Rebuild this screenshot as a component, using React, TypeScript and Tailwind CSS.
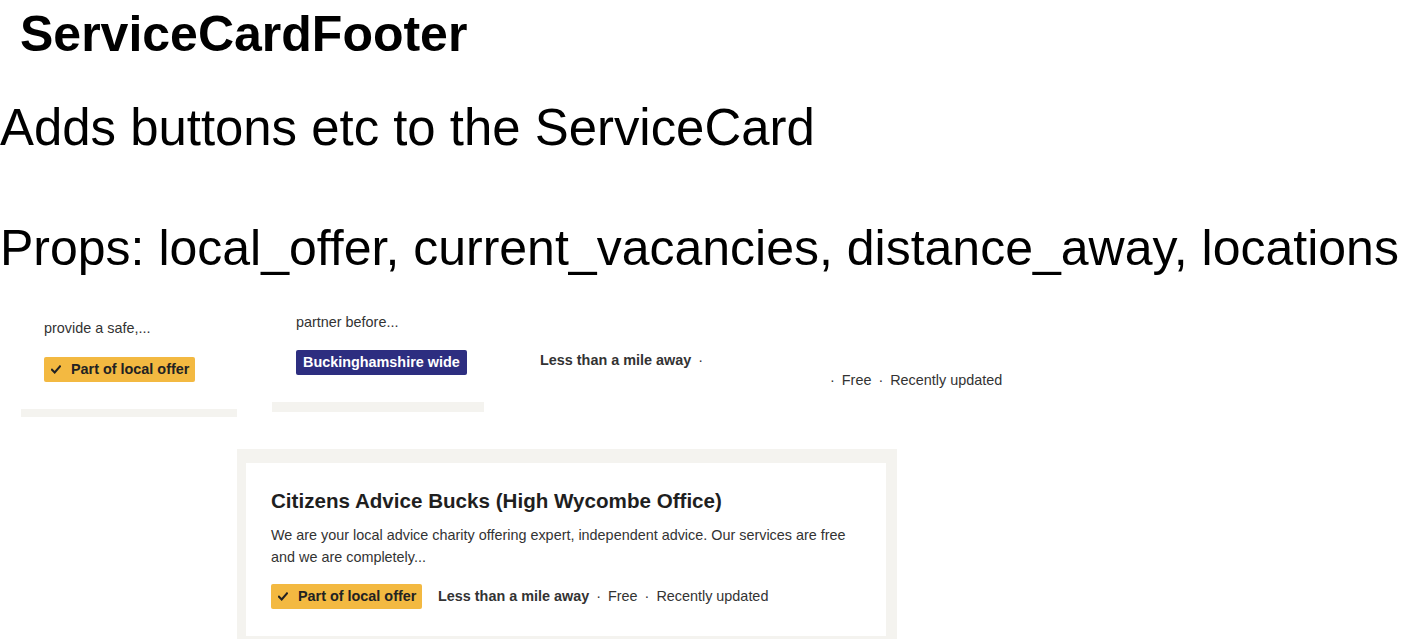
import React from "react";

function Check() {
  return (
    <svg width="10" height="9" viewBox="0 0 10 9" className="shrink-0">
      <path d="M1 4.8 L3.7 7.4 L9 1.4" fill="none" stroke="#222" strokeWidth="2.1" strokeLinecap="square" />
    </svg>
  );
}

function LocalOffer() {
  return (
    <span className="flex h-[25px] w-[151px] items-center gap-[10px] rounded-[2px] bg-[#f3b941] pl-[7px] text-[14.4px] font-bold text-[#222] leading-none">
      <Check />
      <span>Part of local offer</span>
    </span>
  );
}

function Dot() {
  return <span className="mx-[7px]">·</span>;
}

export default function App() {
  return (
    <div className="min-h-[639px] bg-white font-['Liberation_Sans',Arial,sans-serif] text-black">
      <div className="pt-[5px]">
        <h1 className="pl-[20px] text-[50px] font-bold leading-[58px]">ServiceCardFooter</h1>
        <p className="mt-[36px] whitespace-nowrap text-[50.9px] leading-[58px]">Adds buttons etc to the ServiceCard</p>
        <p className="mt-[62px] whitespace-nowrap text-[50px] leading-[58px]">
          Props: local_offer, current_vacancies, distance_away, locations
        </p>
      </div>

      <div className="mt-[18px] flex items-start">
        {/* snippet 1 */}
        <div className="ml-[21px] mt-[16px] flex h-[106px] w-[216px] flex-col overflow-hidden bg-white pt-[6px]">
          <div className="pl-[23px] text-[14.4px] leading-[22px] text-[#333]">provide a safe,...</div>
          <div className="mt-[18px] pl-[23px]">
            <LocalOffer />
          </div>
          <div className="mt-auto h-[8px] bg-[#f4f3ef]" />
        </div>

        {/* snippet 2 */}
        <div className="ml-[35px] flex h-[117px] w-[212px] flex-col bg-white pt-[16px]">
          <div className="pl-[24px] text-[14.4px] leading-[22px] text-[#333]">partner before...</div>
          <div className="mt-[17px] pl-[24px]">
            <span className="inline-flex h-[25px] items-center rounded-[2px] bg-[#2d2e80] px-[7px] text-[14.4px] font-bold leading-none text-white">
              Buckinghamshire wide
            </span>
          </div>
          <div className="mt-auto h-[10px] bg-[#f4f3ef]" />
        </div>

        {/* snippet 3 */}
        <div className="ml-[56px] mt-[54px] w-[290px] whitespace-nowrap text-[14.4px] leading-[22px] text-[#333]">
          <span className="font-bold">Less than a mile away</span>
          <Dot />
        </div>

        {/* snippet 4 */}
        <div className="mt-[74px] whitespace-nowrap text-[14.4px] leading-[22px] text-[#333]">
          <span className="mr-[7px]">·</span>Free
          <Dot />
          Recently updated
        </div>
      </div>

      {/* snippet 5 */}
      <div className="ml-[237px] mt-[32px] w-[660px] bg-[#f4f3ef] pl-[9px] pr-[11px] pt-[14px] pb-[3px]">
        <div className="bg-white px-[25px] pt-[25px] pb-[27px]">
          <h2 className="text-[20.6px] font-bold leading-[25.6px] text-[#1f1f1f]">
            Citizens Advice Bucks (High Wycombe Office)
          </h2>
          <p className="mt-[10px] whitespace-nowrap text-[14.4px] leading-[22px] text-[#333]">
            We are your local advice charity offering expert, independent advice. Our services are free
            <br />
            and we are completely...
          </p>
          <div className="mt-[16px] flex items-center">
            <LocalOffer />
            <div className="ml-[16px] whitespace-nowrap text-[14.4px] leading-[22px] text-[#333]">
              <span className="font-bold">Less than a mile away</span>
              <Dot />
              Free
              <Dot />
              Recently updated
            </div>
          </div>
        </div>
      </div>
    </div>
  );
}
